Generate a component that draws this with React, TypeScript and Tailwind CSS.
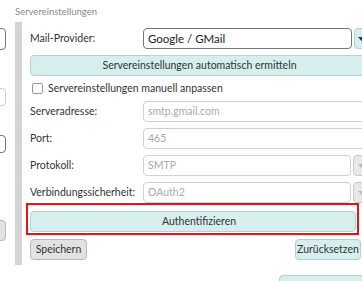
import React from "react";

const teal = "bg-[#d6eeee] border border-[#b0d2d2] rounded-[4px]";

function Label({ children }: { children: React.ReactNode }) {
  return <div className="w-[113px] shrink-0 text-[#333]">{children}</div>;
}

function Tri({ color }: { color: string }) {
  return (
    <svg width="7" height="4" viewBox="0 0 7 4">
      <path d="M0 0 L7 0 L3.5 4 Z" fill={color} />
    </svg>
  );
}

export default function App() {
  return (
    <div className="w-[362px] h-[281px] overflow-hidden bg-white flex font-['Lato',sans-serif] text-[10.5px] leading-none">
      {/* left strip */}
      <div className="w-[6px] shrink-0 overflow-hidden flex flex-col">
        <div className="mt-[28px] ml-[-34px] w-[40px] h-[22px] shrink-0 border border-[#777] rounded-[4px]" />
        <div className="mt-[38px] ml-[-34px] w-[40px] h-[18px] shrink-0 border border-[#ccc] rounded-[4px]" />
        <div className="mt-[29px] ml-[-34px] w-[40px] h-[18px] shrink-0 border border-[#777] rounded-[4px]" />
        <div className="mt-[67px] ml-[-34px] w-[40px] h-[21px] shrink-0 bg-[#e2e2e2] border border-[#bbb] rounded-[4px]" />
      </div>

      {/* main */}
      <div className="ml-[9px] flex flex-col shrink-0">
        <div className="h-[22px] shrink-0 pt-[7px] text-[9.5px] text-[#8a8a8a]">Servereinstellungen</div>
        <div className="flex shrink-0">
          <div className="w-[7px] bg-[#d4d4d4] self-stretch" />
          <div className="ml-[8px] w-[339px] flex flex-col pb-[5px]">
            {/* Mail-Provider */}
            <div className="mt-[6px] h-[21px] flex items-center">
              <Label>Mail-Provider:</Label>
              <div className="w-[209px] h-[21px] border border-[#777] rounded-[4px] flex items-center px-[4px] text-[#222] text-[11.5px]">
                Google / GMail
              </div>
              <div className={`ml-[2px] w-[15px] h-[21px] ${teal} flex items-center justify-center`}>
                <Tri color="#333" />
              </div>
            </div>

            <div className={`mt-[6px] h-[21px] ${teal} flex items-center justify-center text-[#333]`}>
              Servereinstellungen automatisch ermitteln
            </div>

            <div className="mt-[7px] h-[11px] flex items-center">
              <div className="ml-[2px] w-[11px] h-[11px] border border-[#999] rounded-[2px] bg-white" />
              <div className="ml-[5px] text-[#333]">Servereinstellungen manuell anpassen</div>
            </div>

            <div className="mt-[7px] h-[21px] flex items-center">
              <Label>Serveradresse:</Label>
              <div className="flex-1 h-[21px] border border-[#d0d0d0] rounded-[4px] flex items-center px-[4px] text-[#aaa]">
                smtp.gmail.com
              </div>
            </div>

            <div className="mt-[6px] h-[21px] flex items-center">
              <Label>Port:</Label>
              <div className="flex-1 h-[21px] border border-[#d0d0d0] rounded-[4px] flex items-center px-[4px] text-[#aaa]">
                465
              </div>
            </div>

            <div className="mt-[6px] h-[21px] flex items-center">
              <Label>Protokoll:</Label>
              <div className="w-[208px] h-[21px] border border-[#d0d0d0] rounded-[4px] flex items-center px-[4px] text-[#aaa]">
                SMTP
              </div>
              <div className="ml-[2px] flex-1 h-[21px] bg-[#e8e8e8] border border-[#c8c8c8] rounded-[4px] flex items-center justify-center">
                <Tri color="#bbb" />
              </div>
            </div>

            <div className="mt-[6px] h-[21px] flex items-center">
              <Label>Verbindungssicherheit:</Label>
              <div className="w-[208px] h-[21px] border border-[#d0d0d0] rounded-[4px] flex items-center px-[4px] text-[#aaa]">
                OAuth2
              </div>
              <div className="ml-[2px] flex-1 h-[21px] bg-[#e8e8e8] border border-[#c8c8c8] rounded-[4px] flex items-center justify-center">
                <Tri color="#bbb" />
              </div>
            </div>

            <div className="ml-[-4px] w-[333px] border-2 border-[#ee1111] pt-[6px] pl-[2px] pr-[1px] pb-[1px]">
              <div className={`h-[21px] ${teal} flex items-center justify-center pl-[12px] text-[#333]`}>
                Authentifizieren
              </div>
            </div>

            <div className="mt-[4px] h-[21px] flex items-center">
              <div className="w-[57px] h-[21px] bg-[#e2e2e2] border border-[#b8b8b8] rounded-[4px] flex items-center justify-center text-[#333]">
                Speichern
              </div>
              <div className={`ml-auto mr-[8px] w-[66px] h-[21px] ${teal} flex items-center justify-center text-[#333]`}>
                Zurücksetzen
              </div>
            </div>
          </div>
        </div>
        <div className="mt-[10px] ml-[264px] w-[100px] h-[20px] shrink-0 bg-[#d6eeee] border border-[#b0d2d2] rounded-[4px]" />
      </div>
    </div>
  );
}
